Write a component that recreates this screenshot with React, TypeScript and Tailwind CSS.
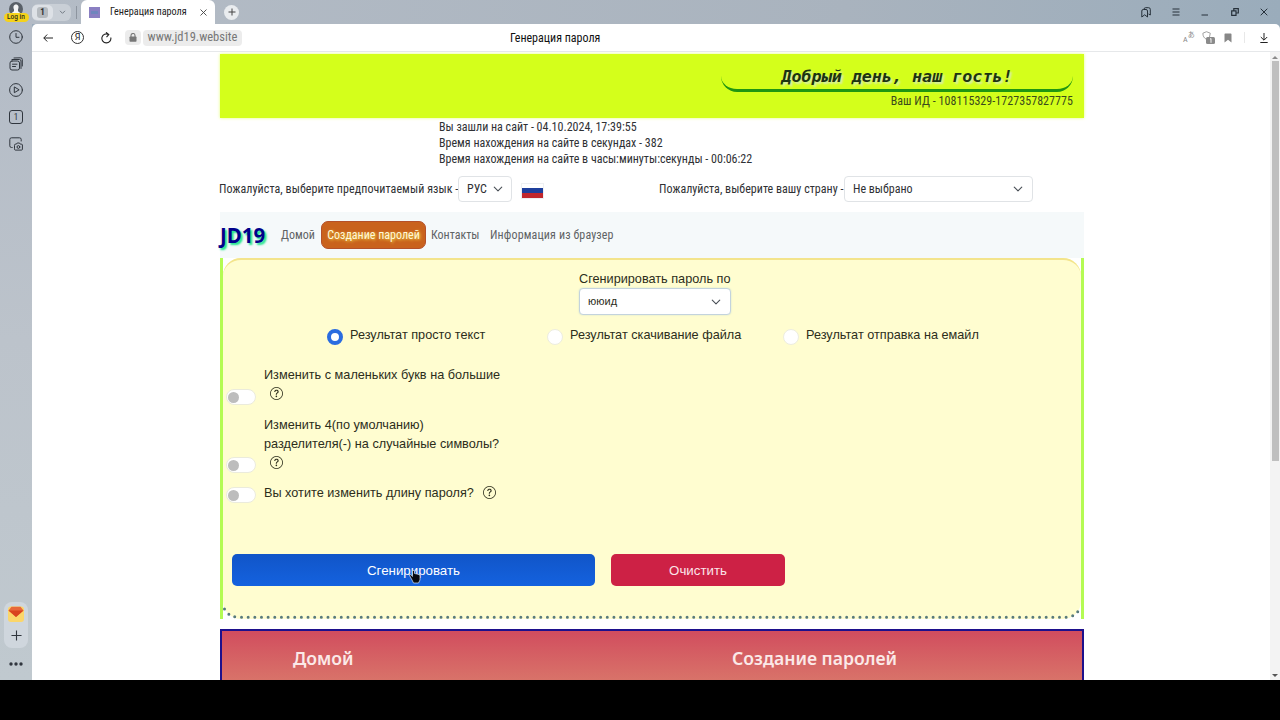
import type { ReactNode } from "react";
import { BsQuestionCircle } from "react-icons/bs";

function Chevron({ className }: { className: string }) {
  return (
    <svg viewBox="0 0 16 16" className={className} fill="none" stroke="#4a5057" strokeWidth="1.800" strokeLinecap="round" strokeLinejoin="round">
      <path d="m2 5 6 6 6-6" />
    </svg>
  );
}

function SideIcon({ children }: { children: ReactNode }) {
  return (
    <svg viewBox="0 0 14 14" className="size-[14px] shrink-0 overflow-visible" fill="none" stroke="#30363e" strokeWidth="1" strokeLinecap="round" strokeLinejoin="round">
      {children}
    </svg>
  );
}

function Sidebar() {
  return (
    <aside className="flex w-8 shrink-0 flex-col items-center bg-linear-to-b from-[#b3bbc6] via-[#bcc3cb] to-[#c0c9cf]">
      <div className="flex h-6 flex-col items-center">
        <svg viewBox="0 0 14 14" className="mt-[2px] size-[14px] shrink-0">
          <circle cx="7" cy="7" r="7" fill="#596068" />
          <path d="M3.2 13V10.5L5 9.3V7.5C3.8 5 4.600 2.600 7 2.600S10.200 5 9 7.500V9.300L10.800 10.500V13Z" fill="#f4f5f6" />
        </svg>
        <div className="-mt-[3px] flex h-[9px] w-[25px] shrink-0 items-center justify-center rounded-full bg-[#f5d21b] text-[6.5px] leading-none font-medium text-[#2c2a1c] [font-stretch:100%]">Log in</div>
      </div>
      <div className="mt-[6px] flex flex-col items-center gap-[12.700px]">
        <SideIcon>
          <circle cx="7" cy="7" r="6.300" />
          <path d="M7 3.500V7.300H10" />
        </SideIcon>
        <SideIcon>
          <rect x="1" y="4" width="9.500" height="9" rx="2" />
          <path d="M3 2.500 10.500 2.500Q12 2.500 12 4V11.500M5 1 11.500 0.800Q13.300 0.800 13.300 2.600V9M3.500 7.200H8M3.500 9.500H6.500" />
        </SideIcon>
        <SideIcon>
          <circle cx="7" cy="7" r="6.400" />
          <path d="M5.300 4.300V9.700L9.800 7Z" />
        </SideIcon>
        <div className="flex size-[14px] items-center justify-center rounded-[3px] border border-[#30363e] text-[9px] leading-none text-[#30363e]">1</div>
        <SideIcon>
          <path d="M3.200 10.500H2.500Q0.800 10.500 0.800 8.800V2.500Q0.800 0.800 2.500 0.800H10.500Q12.200 0.800 12.200 2.500V4" />
          <path d="M5.500 8Q5.500 7.200 6.300 7.200H7.300L8.200 6H10.500L11.400 7.200H12.500Q13.400 7.200 13.400 8V12.200Q13.400 13.100 12.500 13.100H6.300Q5.500 13.100 5.500 12.200Z" />
          <circle cx="9.400" cy="10" r="1.400" />
        </SideIcon>
      </div>
      <div className="mt-auto mb-[14px] flex h-[46px] w-6 flex-col items-center rounded-lg bg-[#cfd6dd] pt-1">
        <svg viewBox="0 0 16 16" className="size-4 shrink-0">
          <rect y="0.500" width="16" height="15.500" rx="3" fill="#fbd66a" />
          <path d="M0.500 4.500 3.500 0.700H12.500L15.500 4.500 8 11Z" fill="#e8683a" />
          <path d="M0.500 4.500H15.500L8 11Z" fill="#d9431f" />
        </svg>
        <svg viewBox="0 0 12 12" className="mt-[8px] size-[11px]" stroke="#30363e" strokeWidth="1.200">
          <path d="M6 0.500V11.500M0.500 6H11.500" />
        </svg>
      </div>
      <svg viewBox="0 0 14 4" className="mb-[14px] h-1 w-[14px]" fill="#30363e">
        <circle cx="2" cy="2" r="1.700" />
        <circle cx="7" cy="2" r="1.700" />
        <circle cx="12" cy="2" r="1.700" />
      </svg>
    </aside>
  );
}

function TabBar() {
  return (
    <div className="flex h-6 shrink-0 items-center bg-linear-to-r from-[#b4bcc6] via-[#a9b3be] via-65% to-[#9aacbb]">
      <div className="mt-px flex h-[17px] w-[39px] items-center rounded-[6px] bg-[#c9cfd6]">
        <div className="flex h-[15px] w-[21px] items-center justify-center rounded-[5px] bg-[#dde1e6]">
          <div className="flex size-[11px] items-center justify-center rounded-[3px] bg-[#b5babf] text-[9px] leading-none font-bold text-[#333]">1</div>
        </div>
        <svg viewBox="0 0 8 6" className="ml-[6px] h-[5px] w-[7px]" fill="none" stroke="#737b84" strokeWidth="1.200">
          <path d="m1 1 3 3 3-3" />
        </svg>
      </div>
      <div className="ml-[5px] h-[13px] w-px bg-[#8d959f]" />
      <div className="ml-1 flex h-6 w-[134px] items-center rounded-t-[6px] bg-white">
        <div className="ml-[8px] flex size-[11px] items-center bg-[#8a7fc2]">
          <div className="ml-[2px] h-[3px] w-[7px] bg-[#6f86bd]" />
        </div>
        <span className="ml-[10px] w-[77px] text-[10.200px] whitespace-nowrap text-[#222]">Генерация пароля</span>
        <svg viewBox="0 0 7 7" className="ml-[13px] size-[7px]" stroke="#444" strokeWidth="0.900">
          <path d="m0.500 0.500 6 6M6.500 0.500l-6 6" />
        </svg>
      </div>
      <div className="ml-[9px] flex size-[15px] items-center justify-center rounded-full bg-[#e9ecef]">
        <svg viewBox="0 0 8 8" className="size-2" stroke="#444" strokeWidth="1">
          <path d="M4 0.500V7.500M0.500 4H7.500" />
        </svg>
      </div>
      <div className="mr-[12px] ml-auto flex items-center gap-[21.300px] text-[#26303a]">
        <svg viewBox="0 0 10 11" className="h-[11px] w-[10px]" fill="none" stroke="currentColor" strokeWidth="1">
          <path d="M0.800 10V4Q0.800 2.500 2.300 2.500H5Q6.500 2.500 6.500 4V10L3.700 7.800ZM3 2.300Q3 0.700 4.600 0.700H7.600Q9.300 0.700 9.300 2.400V8L7.500 7" />
        </svg>
        <svg viewBox="0 0 8 8" className="size-2" stroke="currentColor" strokeWidth="1">
          <path d="M0.500 1H7.500M0.500 4H7.500M0.500 7H7.500" />
        </svg>
        <svg viewBox="0 0 8 8" className="size-2" stroke="currentColor" strokeWidth="1">
          <path d="M0.500 7H7" />
        </svg>
        <svg viewBox="0 0 8 8" className="size-2" fill="none" stroke="currentColor" strokeWidth="1.200">
          <path d="M0.700 2.800H5V7.300H0.700ZM2.800 2.500V0.700H7.300V5H5.300" />
        </svg>
        <svg viewBox="0 0 8 8" className="size-2" stroke="currentColor" strokeWidth="1">
          <path d="m0.700 0.700 6.600 6.600M7.300 0.700 0.700 7.300" />
        </svg>
      </div>
    </div>
  );
}

function AddressBar() {
  return (
    <div className="flex h-7 shrink-0 items-center rounded-t-[5px] border-b border-[#e6e8ea] bg-white">
      <svg viewBox="0 0 10 8" className="ml-[11px] h-2 w-[10px]" fill="none" stroke="#222" strokeWidth="1">
        <path d="M10 4H0.800M4.200 0.500 0.800 4 4.200 7.500" />
      </svg>
      <div className="ml-[18px] flex size-[13px] items-center justify-center rounded-full border border-[#333] text-[9px] leading-none text-[#222] [font-stretch:100%]">Я</div>
      <svg viewBox="0 0 11 12" className="ml-[17px] h-3 w-[11px]" fill="none" stroke="#222" strokeWidth="1.100">
        <path d="M9.800 5.500A4.500 4.500 0 1 1 7.500 2.400M5 0.300 7.800 2.600 5.500 5.200" />
      </svg>
      <div className="ml-[13px] flex h-[15px] w-4 items-center justify-center rounded-[4px] bg-[#ececec]">
        <svg viewBox="0 0 8 9" className="h-[9px] w-2">
          <rect x="0.500" y="3.500" width="7" height="5.300" rx="0.800" fill="#777" />
          <path d="M2 4V2.500A2 2 0 0 1 6 2.500V4" fill="none" stroke="#777" strokeWidth="1.100" />
        </svg>
      </div>
      <div className="ml-[2px] flex h-[16px] w-[99px] items-center justify-center rounded-[4px] bg-[#ececec] text-[12.500px] whitespace-nowrap text-[#777]">www.jd19.website</div>
      <span className="ml-[268px] w-[110px] text-[12px] whitespace-nowrap text-[#111]">Генерация пароля</span>
      <div className="ml-auto flex items-center">
        <div className="flex w-[11px] items-center text-[#888]">
          <span className="mt-1 text-[8px] leading-none">A</span>
          <span className="mb-1 text-[7px] leading-none">あ</span>
        </div>
        <svg viewBox="0 0 14 14" className="ml-[8px] size-[14px]">
          <path d="M4.500 0.700 8.300 2.200Q8.500 6.500 4.700 8.500 0.700 6.500 0.900 2.200Z" fill="none" stroke="#999" strokeWidth="0.900" />
          <rect x="4" y="6" width="9" height="7" rx="1.500" fill="#8b8b8b" />
          <path d="M8 8.200 9 7.500V11.800" fill="none" stroke="#fff" strokeWidth="0.900" />
        </svg>
        <svg viewBox="0 0 8 10" className="ml-[8px] h-[10px] w-2">
          <path d="M0.500 1.300Q0.500 0.500 1.300 0.500H6.700Q7.500 0.500 7.500 1.300V9.500L4 6.800 0.500 9.500Z" fill="#878787" />
        </svg>
        <div className="ml-[12px] h-[11px] w-px bg-[#e8e8e8]" />
        <svg viewBox="0 0 8 10" className="mr-[12px] ml-[15px] h-[10px] w-2" fill="none" stroke="#222" strokeWidth="1">
          <path d="M4 0V7M0.800 4 4 7.200 7.200 4M0.300 9.500H7.700" />
        </svg>
      </div>
    </div>
  );
}

function Header() {
  return (
    <header className="flex h-16 justify-end bg-[#d4ff1b] pr-[11px] shadow-[0_0_3px_#e4ff7a]">
      <div className="flex w-[352px] flex-col">
        <div className="flex h-[38px] items-end justify-center rounded-b-[16px] border-b-[3px] border-[#209611] font-['DejaVu_Sans_Mono',monospace] text-[16.700px] font-bold text-[#1c3412] italic [text-shadow:2px_2px_2px_#d9ecb0]">
          <span className="whitespace-nowrap">Добрый день, наш гость!</span>
        </div>
        <div className="mt-px text-right text-[12px] leading-4 tracking-[0.050px] text-[#3a4a1c]">Ваш ИД - 108115329-1727357827775</div>
      </div>
    </header>
  );
}

function Preferences() {
  return (
    <div className="mt-[9px] -ml-px flex h-[26px] items-center text-[12px] whitespace-nowrap">
      <div className="flex w-[440px] items-center">
        <span className="w-[239px] tracking-[0.070px]">Пожалуйста, выберите предпочитаемый язык -</span>
        <div className="flex h-[26px] w-[54px] items-center justify-between rounded-[4px] border border-[#e0e3e6] bg-white pr-[8px] pl-[8px]">
          РУС
          <Chevron className="size-[10px]" />
        </div>
        <div className="mt-[3px] ml-[9px] flex h-[16px] w-[23px] flex-col border border-[#eef0f2]">
          <div className="flex-1 bg-white" />
          <div className="flex-1 bg-[#1e3f9c]" />
          <div className="flex-1 bg-[#c1272d]" />
        </div>
      </div>
      <span className="w-[185px] tracking-[0.030px]">Пожалуйста, выберите вашу страну -</span>
      <div className="flex h-[26px] w-[189px] items-center justify-between rounded-[4px] border border-[#e0e3e6] bg-white pr-[9px] pl-[8px]">
        Не выбрано
        <Chevron className="size-[10px]" />
      </div>
    </div>
  );
}

function NavBar() {
  return (
    <nav className="mt-[10px] flex h-[46px] items-center bg-[#f5f9fa] pb-px text-[12px] whitespace-nowrap text-[#5f6365]">
      <span className="mt-px w-[61px] font-['Noto_Sans',sans-serif] text-[20.500px] leading-none font-bold text-[#00008b] [text-shadow:2px_2px_2px_#1de58a]">JD19</span>
      <span className="w-[40px]">Домой</span>
      <span className="flex h-[28px] w-[105px] items-center justify-center rounded-[7px] border border-[#b4502a] bg-[#c9621d] text-[#fff8d8] [text-shadow:1px_1px_3px_#f5e04a]">Создание паролей</span>
      <span className="ml-[5px] w-[59px]">Контакты</span>
      <span className="tracking-[0.130px]">Информация из браузер</span>
    </nav>
  );
}

function Radio({ checked, label, className }: { checked?: boolean; label: string; className: string }) {
  return (
    <div className={className}>
      <span className={checked ? "mt-[2px] size-4 rounded-full border-[4.500px] border-[#2a6ce0] bg-white" : "mt-[2px] size-4 rounded-full border border-[#ededdf] bg-white"} />
      <span className="-mt-px ml-[7px]">{label}</span>
    </div>
  );
}

function Switch({ className }: { className: string }) {
  return (
    <div className={className}>
      <span className="size-[11px] rounded-full bg-[#bdbdbd]" />
    </div>
  );
}

function PasswordForm() {
  return (
    <main className="flex h-[361px] border-x-[3px] border-[#b4fb53]">
      <section className="flex min-w-0 flex-1 flex-col rounded-[18px] bg-[#fffdd0] font-['Liberation_Sans',Arial,sans-serif] text-[12.700px] leading-[19px] text-[#2c2d1b]">
        <div className="flex h-[57px] flex-col items-center rounded-t-[18px] border-t-2 border-[#f3e48b] pt-[10px] pl-[6px]">
          <div className="flex w-[152px] flex-col whitespace-nowrap">
            <span className="leading-[18px]">Сгенирировать пароль по</span>
            <div className="flex h-[27px] items-center justify-between rounded-[4px] border border-[#c3d3dd] bg-white pr-[9px] pl-[8px] text-[11px] shadow-[0_0_2px_#cfe0d0]">
              ююид
              <Chevron className="size-[10px]" />
            </div>
          </div>
        </div>
        <div className="mt-[12px] flex h-[20px] whitespace-nowrap">
          <Radio checked label="Результат просто текст" className="ml-[104px] flex w-[220px]" />
          <Radio label="Результат скачивание файла" className="flex w-[236px]" />
          <Radio label="Результат отправка на емайл" className="flex" />
        </div>
        <div className="mt-[19px] flex h-[40px] items-end pl-[3px] whitespace-nowrap">
          <Switch className="mb-[1px] flex h-4 w-[30px] items-center rounded-full border border-[#ebebdc] bg-white pl-px" />
          <div className="mb-[2px] ml-[8px] flex h-[38px] flex-col">
            <span>Изменить с маленьких букв на большие</span>
            <BsQuestionCircle className="mt-[2px] ml-[6px] size-[13px]" />
          </div>
        </div>
        <div className="mt-[9px] flex h-[58px] items-end pl-[3px] whitespace-nowrap">
          <Switch className="flex h-4 w-[30px] items-center rounded-full border border-[#ebebdc] bg-white pl-px" />
          <div className="ml-[8px] flex h-[57px] flex-col">
            <span>Изменить 4(по умолчанию)</span>
            <span>разделителя(-) на случайные символы?</span>
            <BsQuestionCircle className="mt-[2px] ml-[6px] size-[13px]" />
          </div>
        </div>
        <div className="mt-[11px] flex h-[21px] pl-[3px] whitespace-nowrap">
          <Switch className="mt-[3px] flex h-4 w-[30px] items-center rounded-full border border-[#ebebdc] bg-white pl-px" />
          <span className="ml-[8px] w-[219px]">Вы хотите изменить длину пароля?</span>
          <BsQuestionCircle className="mt-[2px] size-[13px]" />
        </div>
        <div className="mt-[49px] flex h-[32px] gap-4 pl-[9px] text-[13.300px] text-white">
          <button className="relative w-[363px] rounded-[5px] bg-linear-to-b from-[#1155c8] to-[#1462df]">
            Сгенирировать
            <svg viewBox="0 0 13 14" className="absolute top-[16px] left-[176px] h-[14px] w-[13px]">
              <path d="M1 4.500Q3 4 4.500 6.500V1.500Q4.500 0.500 5.500 0.500T6.500 1.500V3.500L11 4.500Q12 5 12 6.500V10L10.500 13H5.500L4 10Z" fill="#050a10" stroke="#dce8f5" strokeWidth="0.700" />
            </svg>
          </button>
          <button className="w-[174px] rounded-[5px] bg-[#cd2145] text-[#fbe5e9]">Очистить</button>
        </div>
        <svg viewBox="0 0 858 13" className="mt-auto h-[13px] w-full shrink-0" fill="none">
          <path d="M1.500 3Q6 11 15 11.200H843Q852 11 856.500 3" stroke="#587a7d" strokeWidth="3" strokeLinecap="round" strokeDasharray="0 6.650" />
        </svg>
      </section>
    </main>
  );
}

function Footer() {
  return (
    <footer className="mt-[10px] flex h-[110px] shrink-0 border-2 border-[#1d108c] bg-linear-to-b from-[#d14c5e] to-[#de9a76] pt-[13px] font-['Noto_Sans',sans-serif] text-[17.600px] leading-7 font-semibold text-[#fbe9e8]">
      <span className="w-[439px] pl-[71px]">Домой</span>
      <span className="pl-[71px]">Создание паролей</span>
    </footer>
  );
}

function Scrollbar() {
  return (
    <div className="flex w-[10px] shrink-0 flex-col items-center bg-[#f3f3f3] pt-[4px] pb-[3px]">
      <svg viewBox="0 0 6 3" className="h-[3px] w-[6px]" fill="#8a8a8a">
        <path d="M0 3 3 0 6 3Z" />
      </svg>
      <div className="mt-[2px] h-[400px] w-[7px] bg-[#bfbfbf]" />
      <svg viewBox="0 0 6 3" className="mt-auto h-[3px] w-[6px]" fill="#555">
        <path d="M0 0 3 3 6 0Z" />
      </svg>
    </div>
  );
}

export default function App() {
  return (
    <div className="h-[720px] w-[1280px] overflow-hidden bg-black font-['Roboto','Noto_Sans_CJK_JP',sans-serif] [font-stretch:86%]">
      <div className="flex h-[680px] overflow-hidden">
        <Sidebar />
        <div className="flex min-w-0 flex-1 flex-col">
          <TabBar />
          <div className="flex min-h-0 flex-1 flex-col bg-[#9aacbb]">
            <AddressBar />
            <div className="flex min-h-0 flex-1 bg-white">
              <div className="min-w-0 flex-1 overflow-hidden pt-[2px] pl-[188px] text-[#2f3134]">
                <div className="w-[864px]">
                  <Header />
                  <div className="mt-px pl-[219px] text-[12px] leading-4 whitespace-nowrap">
                    <p>Вы зашли на сайт - 04.10.2024, 17:39:55</p>
                    <p>Время нахождения на сайте в секундах - 382</p>
                    <p>Время нахождения на сайте в часы:минуты:секунды - 00:06:22</p>
                  </div>
                  <Preferences />
                  <NavBar />
                  <PasswordForm />
                  <Footer />
                </div>
              </div>
              <Scrollbar />
            </div>
          </div>
        </div>
      </div>
    </div>
  );
}
